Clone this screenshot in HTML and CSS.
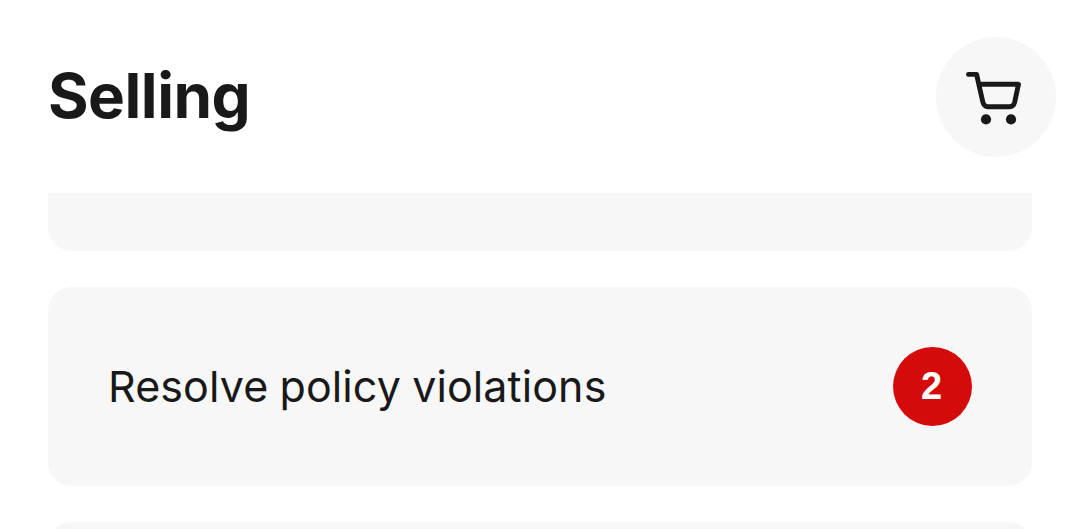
FILE: index.html
```html
<!DOCTYPE html>
<html lang="en">
<head>
<meta charset="utf-8">
<title>Selling</title>
<link rel="stylesheet" href="styles.css">
</head>
<body>
<header class="header">
  <h1 class="title">Selling</h1>
  <button class="cart" aria-label="Cart">
    <svg width="60" height="60" viewBox="0 0 60 60" fill="none" stroke="#191919" stroke-width="4.900" stroke-linecap="round" stroke-linejoin="round">
      <path d="M2.500 7.400H10.600L16.700 34.500Q17.800 39.700 22 39.700H43.500Q47.500 39.700 48.600 35.500L52.500 17.300H13"/>
      <circle cx="20" cy="52.400" r="5.100" fill="#191919" stroke="none"/>
      <circle cx="45" cy="52.400" r="5.100" fill="#191919" stroke="none"/>
    </svg>
  </button>
</header>
<main class="list">
  <section class="card card-top"></section>
  <section class="card card-row">
    <span class="label">Resolve policy violations</span>
    <span class="count">2</span>
  </section>
  <section class="card card-next"></section>
</main>
</body>
</html>
```
FILE: styles.css
```css
* { box-sizing: border-box; }
body { margin: 0; height: 529px; overflow: hidden; background: #fff; color: #191919; font-family: Inter, sans-serif; }
.header { height: 193px; padding: 37px 24px 0 48px; display: flex; justify-content: space-between; align-items: flex-start; }
.title { margin: 19px 0 0; font-size: 62px; line-height: 80px; font-weight: 700; letter-spacing: -0.5px; }
.cart { width: 120px; height: 120px; padding: 0; border: 0; border-radius: 50%; background: #f7f7f7; display: flex; align-items: center; justify-content: center; }
.list { padding: 0 48px; height: 336px; overflow: hidden; display: flex; flex-direction: column; gap: 36px; }
.card { background: #f7f7f7; border-radius: 24px; flex: none; }
.card-top { height: 58px; border-radius: 0 0 24px 24px; }
.card-row { height: 199px; padding: 0 60px; display: flex; align-items: center; justify-content: space-between; }
.card-next { height: 60px; }
.label { margin-bottom: 2px; font-size: 43px; line-height: 60px; white-space: nowrap; letter-spacing: 0.1px; word-spacing: -1px; }
.count { width: 79px; height: 79px; padding-right: 2px; border-radius: 50%; background: #d50b0b; color: #fff; font-family: "Liberation Sans", Arial, sans-serif; font-size: 38px; font-weight: 700; line-height: 79px; text-align: center; }
```
